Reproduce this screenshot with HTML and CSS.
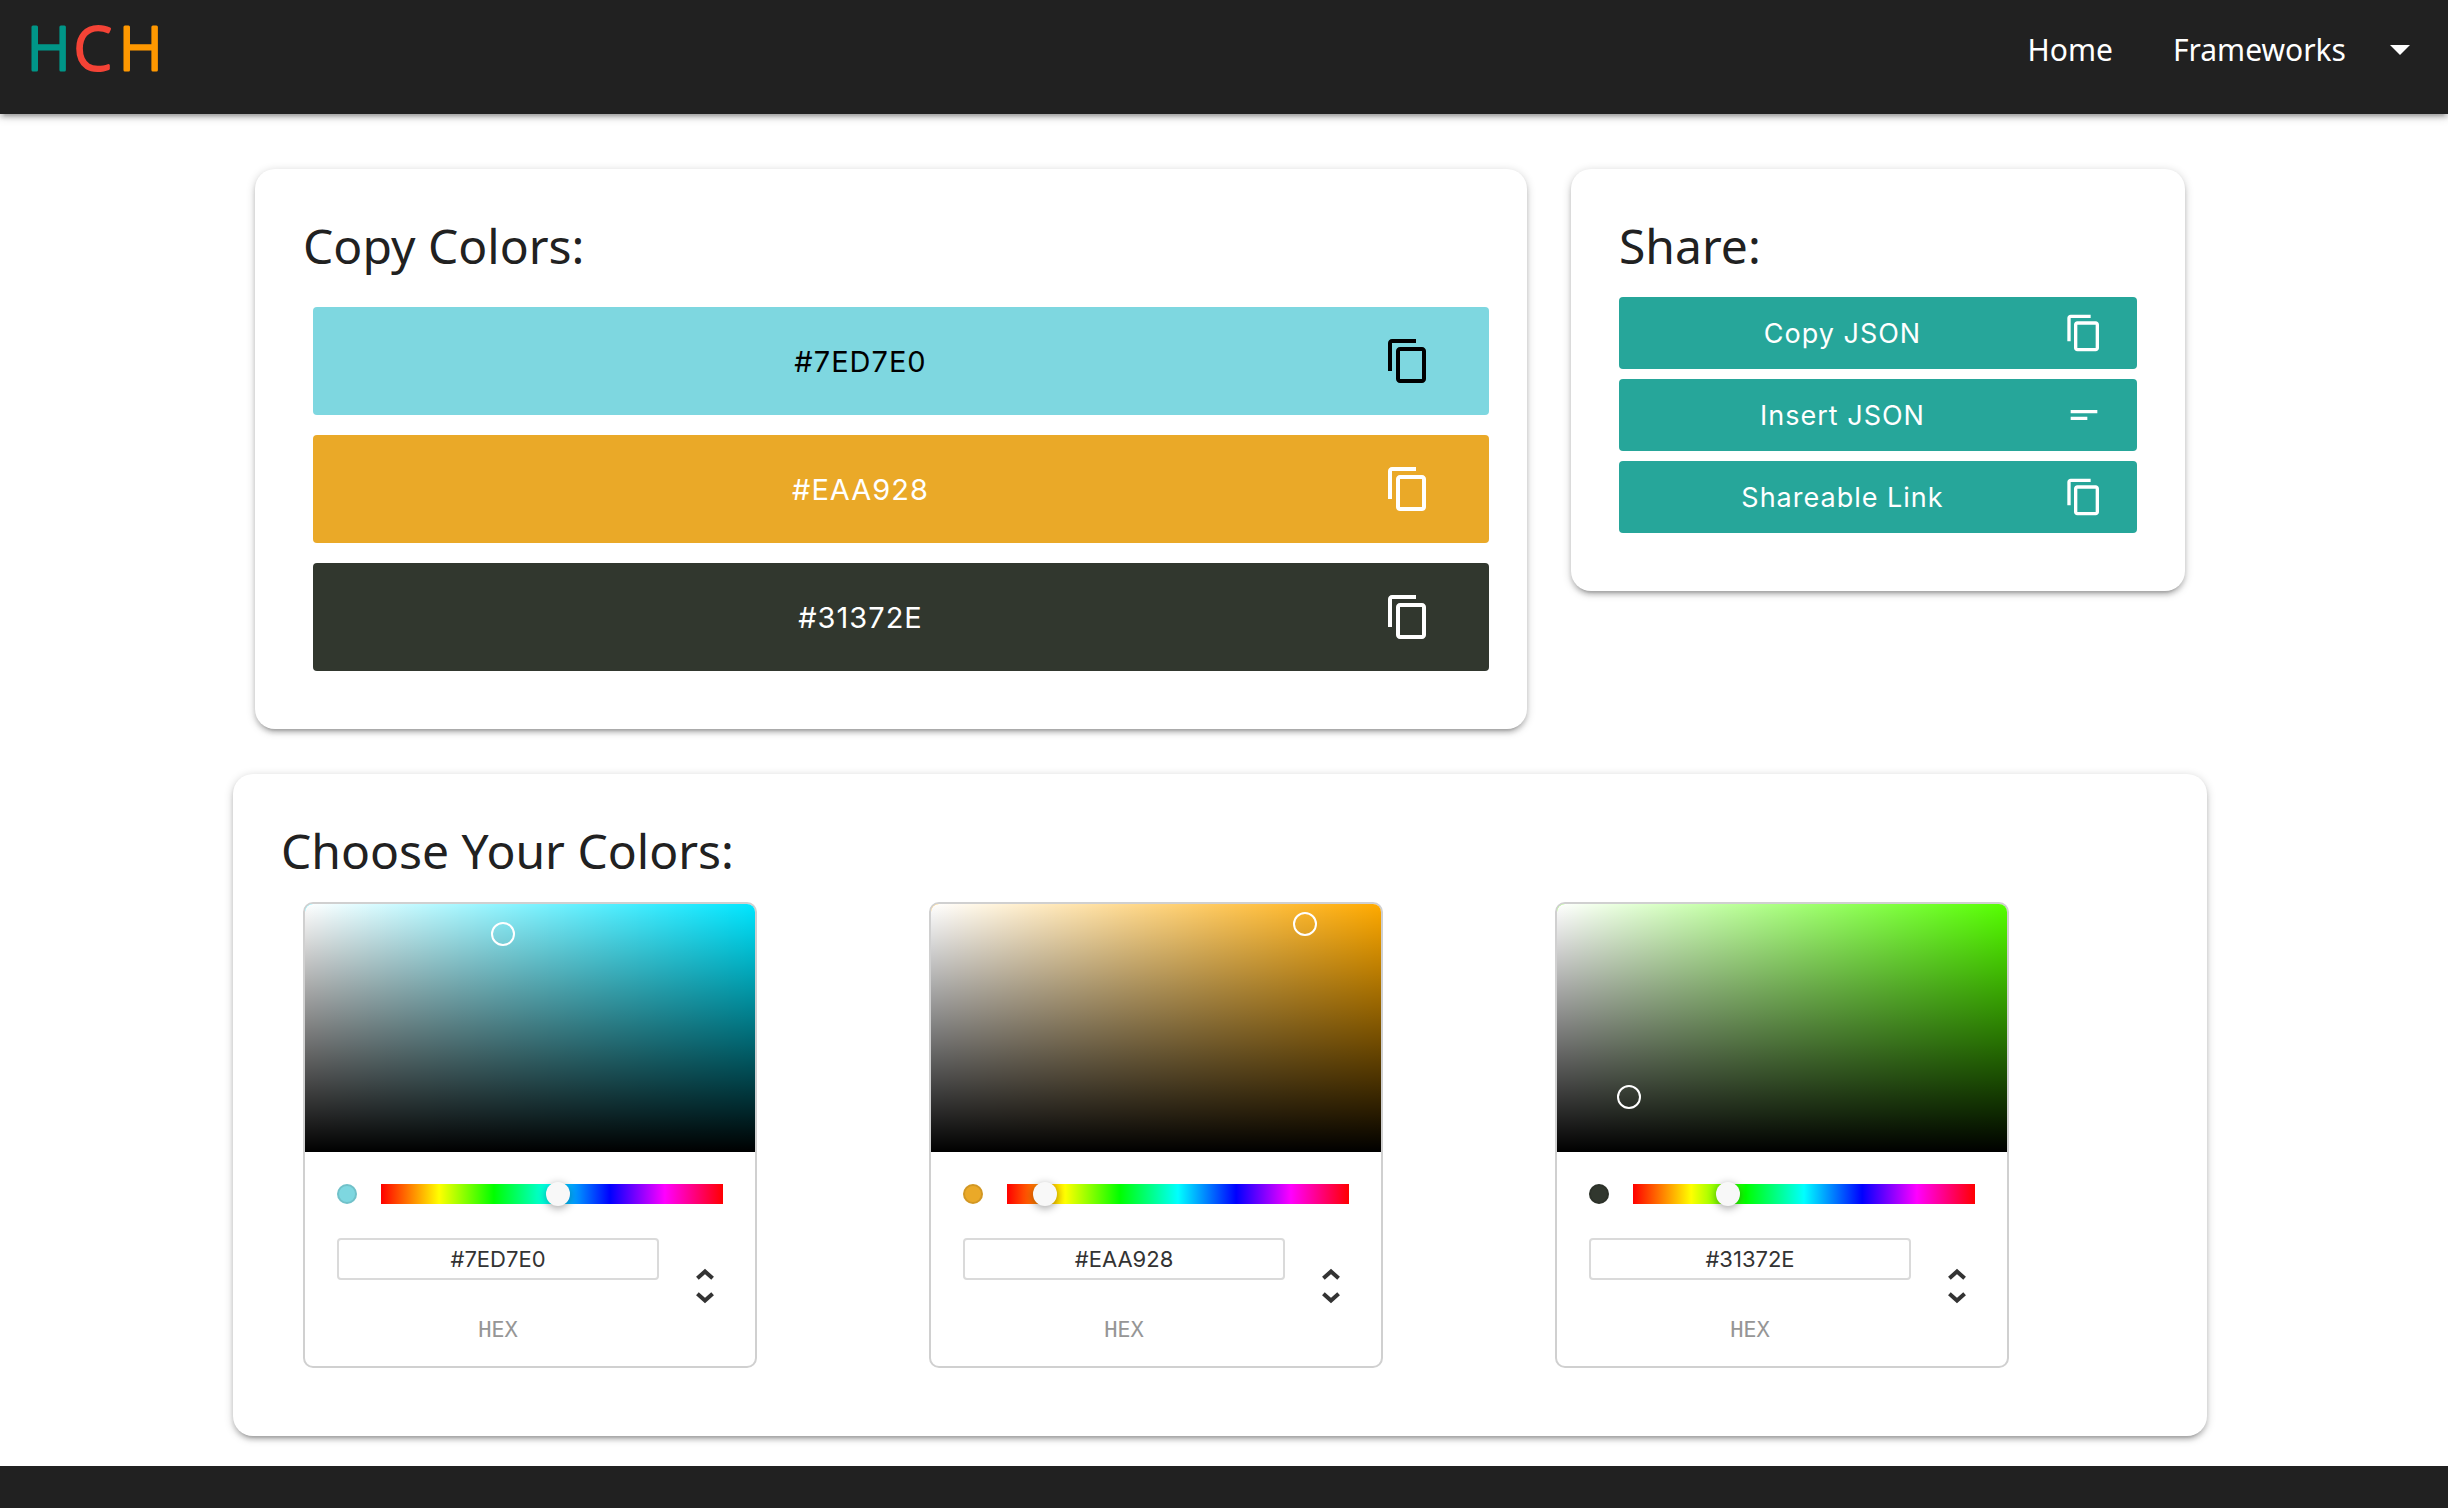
FILE: index.html
```html
<!DOCTYPE html>
<html lang="en">
<head>
<meta charset="utf-8">
<meta name="viewport" content="width=device-width, initial-scale=1">
<title>HCH</title>
<link rel="stylesheet" href="styles.css">
</head>
<body>
<svg class="sprite" aria-hidden="true">
  <symbol id="copy" viewBox="0 0 24 24"><path d="M16 1H4c-1.100 0-2 .9-2 2v14h2V3h12V1zm3 4H8c-1.100 0-2 .9-2 2v14c0 1.100.9 2 2 2h11c1.100 0 2-.9 2-2V7c0-1.100-.9-2-2-2zm0 16H8V7h11v14z"/></symbol>
  <symbol id="short-text" viewBox="0 0 24 24"><path d="M4 9h16v2H4zM4 13h10v2H4z"/></symbol>
  <symbol id="switch" viewBox="0 0 36 36"><path d="M10.400 10.300L18 3.500l7.600 6.800M10.400 25.700L18 32.500l7.600-6.800" fill="none" stroke="#333" stroke-width="4"/></symbol>
</svg>

<header class="navbar">
  <a class="logo" href="#">
    <svg class="logo-mark" viewBox="0 0 144 96">
      <text class="logo-teal" x="1" y="70">H</text>
      <text class="logo-red" x="48" y="70">C</text>
      <text class="logo-orange" x="93" y="70">H</text>
    </svg>
  </a>
  <nav class="menu">
    <a class="menu-item" href="#">Home</a>
    <button class="menu-item menu-drop" type="button">Frameworks
      <svg class="caret" viewBox="0 0 20 10" aria-hidden="true"><path d="M0 0h20L10 10z"/></svg>
    </button>
  </nav>
</header>

<main class="container">
  <section class="card copy-card">
    <h1 class="title">Copy Colors:</h1>
    <div class="swatches">
      <button class="swatch swatch-cyan" type="button"><span class="label">#7ED7E0</span><svg class="icon-lg"><use href="#copy"/></svg></button>
      <button class="swatch swatch-amber" type="button"><span class="label">#EAA928</span><svg class="icon-lg"><use href="#copy"/></svg></button>
      <button class="swatch swatch-dark" type="button"><span class="label">#31372E</span><svg class="icon-lg"><use href="#copy"/></svg></button>
    </div>
  </section>

  <section class="card share-card">
    <h2 class="title">Share:</h2>
    <div class="actions">
      <button class="action" type="button"><span class="label">Copy JSON</span><svg class="icon-md"><use href="#copy"/></svg></button>
      <button class="action" type="button"><span class="label">Insert JSON</span><svg class="icon-md"><use href="#short-text"/></svg></button>
      <button class="action" type="button"><span class="label">Shareable Link</span><svg class="icon-md"><use href="#copy"/></svg></button>
    </div>
  </section>

  <section class="card choose-card">
    <h2 class="title">Choose Your Colors:</h2>
    <div class="pickers">
      <div class="picker">
        <div class="field" style="--hue: 186"><span class="ring" style="left: 44%; top: 12%"></span></div>
        <div class="controls">
          <div class="hue-row">
            <span class="dot dot-cyan"></span>
            <div class="track"><input class="hue" type="range" min="0" max="360" value="186" aria-label="Hue of color 1"></div>
          </div>
          <div class="value-row">
            <div class="value"><input class="hex" id="hex1" type="text" value="#7ED7E0"><label class="hex-label" for="hex1">HEX</label></div>
            <button class="switch" type="button" aria-label="Change format"><svg class="switch-icon"><use href="#switch"/></svg></button>
          </div>
        </div>
      </div>
      <div class="picker">
        <div class="field" style="--hue: 40"><span class="ring" style="left: 83%; top: 8%"></span></div>
        <div class="controls">
          <div class="hue-row">
            <span class="dot dot-amber"></span>
            <div class="track"><input class="hue" type="range" min="0" max="360" value="40" aria-label="Hue of color 2"></div>
          </div>
          <div class="value-row">
            <div class="value"><input class="hex" id="hex2" type="text" value="#EAA928"><label class="hex-label" for="hex2">HEX</label></div>
            <button class="switch" type="button" aria-label="Change format"><svg class="switch-icon"><use href="#switch"/></svg></button>
          </div>
        </div>
      </div>
      <div class="picker">
        <div class="field" style="--hue: 100"><span class="ring" style="left: 16%; top: 78%"></span></div>
        <div class="controls">
          <div class="hue-row">
            <span class="dot dot-dark"></span>
            <div class="track"><input class="hue" type="range" min="0" max="360" value="100" aria-label="Hue of color 3"></div>
          </div>
          <div class="value-row">
            <div class="value"><input class="hex" id="hex3" type="text" value="#31372E"><label class="hex-label" for="hex3">HEX</label></div>
            <button class="switch" type="button" aria-label="Change format"><svg class="switch-icon"><use href="#switch"/></svg></button>
          </div>
        </div>
      </div>
    </div>
  </section>
</main>

<footer class="footer"></footer>
</body>
</html>
```
FILE: styles.css
```css
* { box-sizing: border-box; }

body {
  margin: 0;
  min-height: 100vh;
  display: flex;
  flex-direction: column;
  background: #fff;
  color: #212121;
  font-family: "Noto Sans", sans-serif;
}

button { border: 0; padding: 0; font: inherit; cursor: pointer; }
svg { display: block; fill: currentColor; flex: none; }
.sprite { position: absolute; width: 0; height: 0; }

/* Navigation bar */
.navbar {
  height: 114px;
  padding: 0 38px 0 26px;
  display: flex;
  justify-content: space-between;
  align-items: flex-start;
  background: #212121;
  box-shadow: 0 4px 4px rgba(0,0,0,.14), 0 6px 2px -4px rgba(0,0,0,.12), 0 2px 10px rgba(0,0,0,.2);
}
.logo { text-decoration: none; }
.logo-mark { width: 144px; height: 96px; font-size: 60px; font-weight: 300; stroke-width: 3px; stroke-linejoin: round; }
.logo-teal { fill: #009688; stroke: #009688; }
.logo-red { fill: #f44336; stroke: #f44336; }
.logo-orange { fill: #ff9800; stroke: #ff9800; }
.menu { display: flex; gap: 60px; }
.menu-item { font-size: 30px; line-height: 100px; color: #fff; background: none; text-decoration: none; }
.menu-drop { display: flex; align-items: center; gap: 44px; }
.caret { width: 20px; height: 10px; }

/* Cards */
.container {
  padding: 55px 241px 30px 233px;
  display: grid;
  grid-template-columns: 2fr 1fr;
  row-gap: 45px;
  align-items: start;
}
.card {
  padding: 48px 48px 58px;
  border-radius: 20px;
  background: #fff;
  box-shadow: 0 4px 4px rgba(0,0,0,.14), 0 6px 2px -4px rgba(0,0,0,.12), 0 2px 10px rgba(0,0,0,.2);
}
.copy-card, .share-card { margin: 0 22px; }
.choose-card { grid-column: 1 / -1; padding-bottom: 68px; }
.title { margin: 0; height: 80px; font-size: 48px; line-height: 58px; font-weight: 400; }

/* Buttons */
.swatches { display: flex; flex-direction: column; gap: 20px; margin: 10px -10px 0 10px; }
.swatch, .action { display: flex; align-items: center; border-radius: 4px; font-family: Inter, sans-serif; color: #fff; }
.swatch { height: 108px; padding: 0 57px 0 32px; gap: 8px; font-size: 29px; letter-spacing: 1px; }
.label { flex: 1; text-align: center; }
.swatch-cyan { background: #7ed7e0; color: #000; }
.swatch-amber { background: #eaa928; }
.swatch-dark { background: #31372e; }
.actions { display: flex; flex-direction: column; gap: 10px; }
.action { height: 72px; padding: 0 33px 0 32px; gap: 30px; background: #26a69a; font-size: 27px; letter-spacing: 1px; }
.icon-lg { width: 48px; height: 48px; }
.icon-md { width: 40px; height: 40px; }

/* Color pickers */
.pickers { display: grid; grid-template-columns: repeat(3, 1fr); }
.picker { width: 454px; margin-left: 22px; border: 2px solid #d0d0d0; border-radius: 10px; overflow: hidden; }
.field {
  position: relative;
  height: 248px;
  background: linear-gradient(to top, #000, transparent), linear-gradient(to right, #fff, transparent), hsl(var(--hue), 100%, 50%);
}
.ring { position: absolute; width: 24px; height: 24px; margin: -12px 0 0 -12px; border: 2px solid #fff; border-radius: 50%; }
.controls { padding: 32px 32px 24px; }
.hue-row { display: flex; gap: 24px; margin-bottom: 34px; }
.dot { width: 20px; height: 20px; border-radius: 50%; box-shadow: inset 0 0 0 2px rgba(0,0,0,.1); }
.dot-cyan { background: #7ed7e0; }
.dot-amber { background: #eaa928; }
.dot-dark { background: #31372e; }
.track {
  flex: 1;
  height: 20px;
  display: flex;
  background: linear-gradient(to right, #f00 0%, #ff0 17%, #0f0 33%, #0ff 50%, #00f 67%, #f0f 83%, #f00 100%);
}
/* The slider overhangs its track by half a thumb at each end */
.hue { appearance: none; flex: 1; height: 20px; margin: 0 -12px; background: none; }
.hue::-webkit-slider-thumb { appearance: none; width: 24px; height: 24px; border-radius: 50%; background: #f8f8f8; box-shadow: 0 2px 8px rgba(0,0,0,.37); }
.value-row { display: flex; align-items: flex-start; gap: 28px; }
.value { flex: 1; display: flex; flex-direction: column; gap: 38px; }
.hex {
  width: 100%;
  height: 42px;
  padding: 0;
  border: 2px solid #dadada;
  border-radius: 4px;
  color: #333;
  font-family: Inter, sans-serif;
  font-size: 22px;
  text-align: center;
}
.hex-label { color: #969696; font-family: "DejaVu Sans Mono", monospace; font-size: 22px; line-height: 24px; text-align: center; }
.switch { margin-top: 30px; background: none; }
.switch-icon { width: 36px; height: 36px; }

.footer { flex: 1 0 42px; background: #212121; }
```
